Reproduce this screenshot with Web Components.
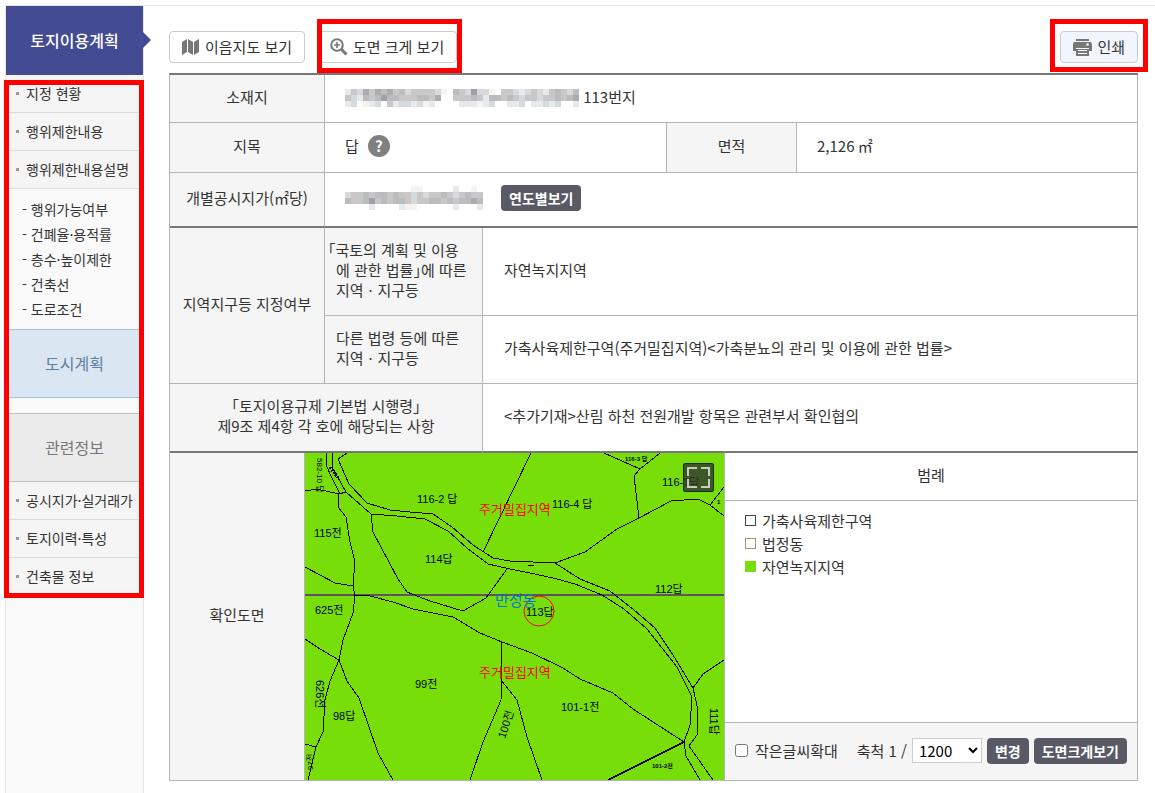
<!DOCTYPE html>
<html lang="ko">
<head>
<meta charset="utf-8">
<meta name="viewport" content="width=device-width, initial-scale=1">
<title>토지이용계획</title>
<style>
    body {
        margin: 0;
        background: #fff;
        color: #333;
        font: 15px/20px "Noto Sans CJK KR", "Noto Sans", sans-serif;
    }
</style>
</head>
<body>

<land-page>
    <side-menu slot="side" heading="토지이용계획">
        <mark-box class="menu">
            <menu-item>지정 현황</menu-item>
            <menu-item>행위제한내용</menu-item>
            <menu-item>행위제한내용설명</menu-item>
            <sub-menu>
                <a href="#use">- 행위가능여부</a>
                <a href="#ratio">- 건폐율·용적률</a>
                <a href="#height">- 층수·높이제한</a>
                <a href="#line">- 건축선</a>
                <a href="#road">- 도로조건</a>
            </sub-menu>
            <menu-title tone="blue">도시계획</menu-title>
            <menu-title tone="gray">관련정보</menu-title>
            <menu-item>공시지가·실거래가</menu-item>
            <menu-item>토지이력·특성</menu-item>
            <menu-item>건축물 정보</menu-item>
        </mark-box>
    </side-menu>

    <tool-bar>
        <tool-button icon="map">이음지도 보기</tool-button>
        <mark-box class="zoom"><tool-button icon="zoom">도면 크게 보기</tool-button></mark-box>
        <mark-box class="print" slot="end"><tool-button icon="print" tinted>인쇄</tool-button></mark-box>
    </tool-bar>

    <land-table>
        <span slot="address"><mosaic-strip kind="address"></mosaic-strip> 113번지</span>
        <span slot="category">답</span>
        <span slot="area">2,126 ㎡</span>
        <mosaic-strip slot="price" kind="price"></mosaic-strip>
        <span slot="zone">자연녹지지역</span>
        <span slot="other">가축사육제한구역(주거밀집지역)&lt;가축분뇨의 관리 및 이용에 관한 법률&gt;</span>
        <span slot="extra">&lt;추가기재&gt;산림 하천 전원개발 항목은 관련부서 확인협의</span>
        <parcel-map slot="map"></parcel-map>
        <legend-item slot="legend" style="--line: #444">가축사육제한구역</legend-item>
        <legend-item slot="legend" style="--line: #a89468">법정동</legend-item>
        <legend-item slot="legend" style="--line: #78de0a; --fill: #78de0a">자연녹지지역</legend-item>
        <scale-form slot="scale"></scale-form>
    </land-table>
</land-page>

<script>
// small helper: every element gets an open shadow root filled from a template
function makeElement(name, html, setup) {
    const template = document.createElement('template');
    template.innerHTML = html;

    class Element extends HTMLElement {
        constructor() {
            super();
            this.attachShadow({mode: 'open'});
            this.shadowRoot.appendChild(template.content.cloneNode(true));
            if (setup) setup(this, this.shadowRoot);
        }
    }

    window.customElements.define(name, Element);
}

// Page frame
makeElement('land-page', `
    <style>
        :host {
            display: flex;
            box-sizing: border-box;
            min-height: 100vh;
            padding: 5px 0 0 5px;
        }
        .frame {
            display: flex;
            flex: 1;
            border-top: 1px solid #e5e5e5;
            min-width: 0;
        }
        main {
            flex: 1;
            min-width: 0;
            padding: 25px 17px 12px 25px;
        }
    </style>
    <div class="frame">
        <slot name="side"></slot>
        <main><slot></slot></main>
    </div>
`);

// Sidebar
makeElement('side-menu', `
    <style>
        :host {
            display: block;
            width: 137px;
            flex: none;
            background: #fafafa;
            border-left: 1px solid #e5e5e5;
            border-right: 1px solid #e5e5e5;
        }
        h1 {
            position: relative;
            margin: 0;
            background: #434c93;
            color: #fff;
            font-size: 16px;
            font-weight: 500;
            line-height: 69px;
            text-align: center;
        }
        h1::after {
            content: "";
            position: absolute;
            left: 100%;
            top: 26px;
            border: 8px solid transparent;
            border-left-color: #434c93;
            border-right: 0;
        }
    </style>
    <h1></h1>
    <nav><slot></slot></nav>
`, (el, root) => {
    root.querySelector('h1').textContent = el.getAttribute('heading');
});

makeElement('menu-item', `
    <style>
        :host {
            display: block;
            background: #f5f5f5;
            border-bottom: 1px solid #ddd;
        }
        a {
            display: flex;
            align-items: center;
            gap: 7px;
            padding-left: 10px;
            color: #333;
            font-size: 14px;
            line-height: 37px;
            text-decoration: none;
            white-space: nowrap;
        }
        a::before {
            content: "";
            width: 3px;
            height: 3px;
            background: #999;
        }
    </style>
    <a href="#"><slot></slot></a>
`);

makeElement('sub-menu', `
    <style>
        :host {
            display: flex;
            flex-direction: column;
            padding: 8px 0 7px 16px;
        }
        ::slotted(a) {
            color: #333;
            font-size: 14px;
            line-height: 25px;
            text-decoration: none;
        }
    </style>
    <slot></slot>
`);

makeElement('menu-title', `
    <style>
        :host {
            display: block;
            border: 1px solid #c0c0c0;
            border-width: 1px 0;
            background: #ebebeb;
            color: #777;
        }
        :host([tone="blue"]) {
            border-color: #a5c1de;
            background: #dae6f2;
            color: #60809f;
            margin-bottom: 15px;
        }
        a {
            display: block;
            color: inherit;
            font-size: 16px;
            line-height: 67px;
            text-align: center;
            text-decoration: none;
        }
    </style>
    <a href="#"><slot></slot></a>
`);

// Red marker drawn over whatever is inside
makeElement('mark-box', `
    <style>
        :host {
            display: block;
            position: relative;
        }
        :host::after {
            content: "";
            position: absolute;
            inset: -12px -5px -10px 0;
            border: 5px solid #f00;
            pointer-events: none;
            z-index: 1;
        }
        :host(.menu)::after {
            inset: 5px -1px -2px -2px;
        }
        :host(.print)::after {
            inset: -12px -10px -9px -10px;
        }
    </style>
    <slot></slot>
`);

// Buttons above the table
makeElement('tool-bar', `
    <style>
        :host {
            display: flex;
            gap: 12px;
            margin-bottom: 10px;
        }
        .space {
            flex: 1;
        }
    </style>
    <slot></slot>
    <div class="space"></div>
    <slot name="end"></slot>
`);

const icons = {
    map: `<svg width="18" height="18" viewBox="0 0 18 18" fill="#777">
        <path d="M0 4 5 1V14L0 17ZM6 1 11 4V17L6 14ZM12 4 14 3V15L12 16.500ZM12 4 17 1V14L12 17Z"/>
    </svg>`,
    zoom: `<svg width="18" height="18" viewBox="0 0 18 18" fill="none" stroke="#777">
        <circle cx="7" cy="7" r="5.800" stroke-width="2"/>
        <path d="M11.300 11.300 16.500 16.500" stroke-width="3"/>
        <path d="M4 7H10M7 4V10" stroke-width="1.600"/>
    </svg>`,
    print: `<svg width="19" height="18" viewBox="0 0 19 18" fill="#777">
        <path d="M3 1H16V3H3ZM2 4H17Q19 4 19 6V13H16V10H3V13H0V6Q0 4 2 4Z"/>
        <circle cx="14.500" cy="6.500" r="1.300" fill="#fff"/>
        <path d="M3 11H16V18H3Z"/>
        <path d="M5 12.500H14M5 15.500H14" stroke="#fff"/>
    </svg>`
};

makeElement('tool-button', `
    <style>
        :host {
            display: block;
        }
        button {
            display: flex;
            align-items: center;
            gap: 5px;
            height: 32px;
            padding: 0 12px;
            border: 1px solid #ccc;
            border-radius: 4px;
            background: #fff;
            color: #333;
            font: inherit;
            white-space: nowrap;
            cursor: pointer;
        }
        :host([tinted]) button {
            background: #f1f6fe;
        }
        i {
            display: flex;
        }
    </style>
    <button type="button"><i></i><slot></slot></button>
`, (el, root) => {
    root.querySelector('i').innerHTML = icons[el.getAttribute('icon')];
});

// Dark action button
makeElement('dark-button', `
    <style>
        :host {
            display: inline-block;
        }
        button {
            display: block;
            height: 26px;
            padding: 0 8px;
            border: 0;
            border-radius: 4px;
            background: #5a5a66;
            color: #fff;
            font: inherit;
            font-size: 14px;
            font-weight: 700;
            white-space: nowrap;
            cursor: pointer;
        }
    </style>
    <button type="button"><slot></slot></button>
`);

// Pixelated strip that covers private values, one hex digit per 6px block
const mosaics = {
    address: [
        'ecdacabacbdccccdf-bcd9ddf-ccdedcdecbcdb',
        'cdebcb9bbcccbbca--cccbcebbcbcdccdccbcba',
        'ed-fed-ceddedfe----eeefed--eed-eeded--e'
    ],
    price: [
        '-----------ff-----e--f-',
        'dccbcbbcbccdcdccbcdcbcc',
        'bccb9cbcbbcdccbbcbcbbab',
        '----e----eff------e---e'
    ]
};

makeElement('mosaic-strip', `
    <style>
        :host {
            display: inline-block;
            vertical-align: middle;
        }
        svg {
            display: block;
        }
    </style>
    <svg aria-hidden="true" shape-rendering="crispEdges"></svg>
`, (el, root) => {
    const rows = mosaics[el.getAttribute('kind')];
    const svg = root.querySelector('svg');
    const tints = {9: '#a0a0a6', a: '#a9adaf', b: '#bbbcbd', c: '#cac7c9', d: '#d6dadd', e: '#e7eaec', f: '#f6f4f0'};
    let rects = '';
    rows.forEach((row, y) => {
        [...row].forEach((key, x) => {
            if (tints[key]) rects += `<rect x="${x * 6}" y="${y * 6}" width="6" height="6" fill="${tints[key]}"/>`;
        });
    });
    svg.setAttribute('width', rows[0].length * 6);
    svg.setAttribute('height', rows.length * 6);
    svg.innerHTML = rects;
});

makeElement('help-button', `
    <style>
        :host {
            display: inline-block;
        }
        button {
            display: block;
            width: 22px;
            height: 22px;
            padding: 0;
            border: 0;
            border-radius: 50%;
            background: #808080;
            color: #fff;
            font: inherit;
            font-weight: 700;
            cursor: pointer;
        }
    </style>
    <button type="button" aria-label="도움말">?</button>
`);

// Main table
makeElement('land-table', `
    <style>
        :host {
            display: block;
            --line: #b5b5b5;
            --strong: #777;
        }
        table {
            width: 100%;
            table-layout: fixed;
            border-collapse: separate;
            border-spacing: 0;
            border-top: 2px solid var(--strong);
            border-left: 1px solid var(--line);
        }
        th, td {
            box-sizing: border-box;
            padding: 0 0 3px;
            border-right: 1px solid var(--line);
            border-bottom: 1px solid var(--line);
            font-weight: 400;
            vertical-align: middle;
        }
        th {
            background: #f5f5f5;
            text-align: center;
        }
        td {
            padding-left: 20px;
            text-align: left;
        }
        .end > * {
            border-bottom: 2px solid var(--strong);
        }
        .text {
            padding-left: 21px;
        }
        .law {
            padding-left: 11px;
            text-align: left;
            white-space: nowrap;
            font-feature-settings: "halt";
        }
        .hang {
            text-indent: -8px;
        }
        .hang span {
            display: block;
            text-indent: 0;
        }
        .row {
            display: flex;
            align-items: center;
            gap: 9px;
        }
        .row.wide {
            gap: 18px;
        }
        .map {
            padding: 0;
        }
        .white {
            background: #fff;
        }
        .legend {
            padding-top: 8px;
            vertical-align: top;
        }
        .scale {
            padding: 0 10px 2px;
            background: #f5f5f5;
        }
    </style>
    <table>
        <colgroup>
            <col style="width: 135px">
            <col style="width: 20px">
            <col style="width: 158px">
            <col style="width: 184px">
            <col style="width: 58px">
            <col style="width: 72px">
            <col>
        </colgroup>
        <tbody>
            <tr style="height: 48px">
                <th colspan="2">소재지</th>
                <td colspan="5"><slot name="address"></slot></td>
            </tr>
            <tr style="height: 50px">
                <th colspan="2">지목</th>
                <td colspan="2"><div class="row"><slot name="category"></slot><help-button></help-button></div></td>
                <th colspan="2">면적</th>
                <td><slot name="area"></slot></td>
            </tr>
            <tr class="end" style="height: 55px">
                <th colspan="2">개별공시지가(㎡당)</th>
                <td colspan="5"><div class="row wide"><slot name="price"></slot><dark-button>연도별보기</dark-button></div></td>
            </tr>
            <tr style="height: 88px">
                <th colspan="2" rowspan="2">지역지구등 지정여부</th>
                <th class="law hang">「국토의 계획 및 이용<span>에 관한 법률」에 따른</span><span>지역ㆍ지구등</span></th>
                <td class="text" colspan="4"><slot name="zone"></slot></td>
            </tr>
            <tr style="height: 68px">
                <th class="law">다른 법령 등에 따른<br>지역ㆍ지구등</th>
                <td class="text" colspan="4"><slot name="other"></slot></td>
            </tr>
            <tr class="end" style="height: 69px">
                <th colspan="3">「토지이용규제 기본법 시행령」<br>제9조 제4항 각 호에 해당되는 사항</th>
                <td class="text" colspan="4"><slot name="extra"></slot></td>
            </tr>
            <tr style="height: 48px">
                <th rowspan="3">확인도면</th>
                <td class="map" colspan="4" rowspan="3"><slot name="map"></slot></td>
                <th class="white" colspan="2">범례</th>
            </tr>
            <tr style="height: 222px">
                <td class="legend" colspan="2"><slot name="legend"></slot></td>
            </tr>
            <tr style="height: 58px">
                <td class="scale" colspan="2"><slot name="scale"></slot></td>
            </tr>
        </tbody>
    </table>
`);

makeElement('legend-item', `
    <style>
        :host {
            display: flex;
            align-items: center;
            gap: 6px;
            line-height: 23px;
        }
        :host::before {
            content: "";
            box-sizing: border-box;
            width: 11px;
            height: 11px;
            border: 1px solid var(--line);
            background: var(--fill, #fff);
        }
    </style>
    <slot></slot>
`);

makeElement('scale-form', `
    <style>
        :host {
            display: block;
        }
        form {
            display: flex;
            align-items: center;
            justify-content: flex-end;
            gap: 5px;
            margin: 0;
            white-space: nowrap;
        }
        .check {
            display: flex;
            align-items: center;
            gap: 7px;
            margin-right: auto;
        }
        input {
            width: 13px;
            height: 13px;
            margin: 0;
        }
        select {
            box-sizing: border-box;
            width: 70px;
            height: 25px;
            padding: 0 0 0 2px;
            border: 1px solid #ccc;
            background-color: #fff;
            color: #000;
            font: inherit;
        }
    </style>
    <form>
        <div class="check">
            <input type="checkbox" id="enlarge">
            <label for="enlarge">작은글씨확대</label>
        </div>
        <label for="scale">축척 1 /</label>
        <select id="scale">
            <option>600</option>
            <option selected>1200</option>
            <option>2400</option>
        </select>
        <dark-button>변경</dark-button>
        <dark-button>도면크게보기</dark-button>
    </form>
`);

// Parcel drawing
makeElement('parcel-map', `
    <style>
        :host {
            display: block;
            position: relative;
        }
        .plan {
            display: block;
            width: 100%;
            background: #78de0a;
        }
        .edges {
            fill: none;
            stroke: #000;
            shape-rendering: crispEdges;
        }
        text {
            font-family: "Liberation Sans", "Noto Sans CJK KR", sans-serif;
            font-size: 11px;
        }
        .district {
            font-size: 13px;
            fill: #f00;
        }
        .dong {
            font-size: 15px;
            fill: #0078d0;
        }
        .small {
            font-size: 8px;
        }
        .tiny {
            font-size: 6px;
            font-weight: 700;
        }
        button {
            position: absolute;
            top: 10px;
            right: 10px;
            width: 31px;
            height: 29px;
            padding: 0;
            border: 1px solid #1e2b16;
            border-radius: 2px;
            background: rgba(48, 52, 48, .8);
            cursor: pointer;
        }
        button svg {
            display: block;
            margin: auto;
        }
    </style>
    <svg class="plan" viewBox="0 0 419 327">
        <rect y="141" width="419" height="2" fill="#5c5560"/>
        <g class="edges">
            <path d="M22 0 21 6 22 14 27 25 35 41"/>
            <path d="M27 0V14L41 39 66 61 92 63 120 66 143 78 162 95 183 111 205 116 230 121 252 126 270 131 297 142 319 156 342 176 372 214 387 244 385 272 379 289 381 303 395 327"/>
            <path d="M42 0 33 6 44 31 62 50 85 57 105 59 128 61 147 74 168 92 188 105 205 108 250 110 275 126 305 138 329 157 350 175 368 202 388 235 393 257 392 282 384 293 408 327"/>
            <path d="M0 38 12 36 34 41 41 39"/>
            <path d="M34 41 33 54 41 64 45 89 50 109 48 132 50 143 48 160 38 187 34 207 42 228 54 245 73 300 88 327"/>
            <path d="M0 114 30 130 48 133"/>
            <path d="M66 61 68 79 93 126 102 139 125 148 158 158 181 145 202 116"/>
            <path d="M50 142 65 143 88 149 108 156 148 164 175 180 197 189 227 200 258 215 275 226 308 240 328 256 379 289"/>
            <path d="M226 0 178 99"/>
            <path d="M197 189 196 247 178 289 165 327"/>
            <path d="M196 227 212 247 222 284 237 327"/>
            <path d="M0 186 15 196 34 207 25 228 20 247 18 279 11 294 3 327"/>
            <path d="M0 291 11 294"/>
            <path d="M379 289 303 327" stroke-width="2"/>
            <path d="M388 235 398 221 419 207"/>
            <path d="M299 0 335 16 355 0M335 16 329 23 334 65"/>
            <path d="M250 110 280 99 312 76 334 65 366 48 393 46 405 52 419 63M405 52 419 34"/>
            <path d="M223 112H229"/>
            <path d="M25 14 33 25" stroke-width="3" stroke-dasharray="2 1"/>
        </g>
        <circle cx="234" cy="158" r="15" fill="none" stroke="#f00"/>
        <text x="112" y="50">116-2 답</text>
        <text x="9" y="84">115전</text>
        <text x="120" y="110">114답</text>
        <text x="10" y="161">625전</text>
        <text x="247" y="55">116-4 답</text>
        <text x="357" y="33">116-1답</text>
        <text class="tiny" x="320" y="8">116-3 답</text>
        <text x="350" y="140">112답</text>
        <text x="221" y="163">113답</text>
        <text x="110" y="235">99전</text>
        <text x="28" y="267">98답</text>
        <text x="256" y="258">101-1전</text>
        <text class="tiny" x="347" y="315">101-2전</text>
        <text transform="translate(200 286) rotate(-72)">100전</text>
        <text transform="translate(11 227) rotate(90)">626전</text>
        <text transform="translate(405 255) rotate(90)">111답</text>
        <text class="small" transform="translate(12 5) rotate(90)">582-10 답</text>
        <text class="small" transform="translate(8 317) rotate(-90)">97전</text>
        <text class="tiny" x="412" y="51">1</text>
        <text class="district" x="174" y="61">주거밀집지역</text>
        <text class="district" x="174" y="224">주거밀집지역</text>
        <text class="dong" x="190" y="153">만성동</text>
    </svg>
    <button type="button" aria-label="전체화면">
        <svg width="25" height="23" viewBox="0 0 25 23" fill="none" stroke="#c5cdbd" stroke-width="2">
            <path d="M2 10V2H11M15 2H23V10M23 13V21H15M11 21H2V13"/>
        </svg>
    </button>
`);
</script>
</body>
</html>
